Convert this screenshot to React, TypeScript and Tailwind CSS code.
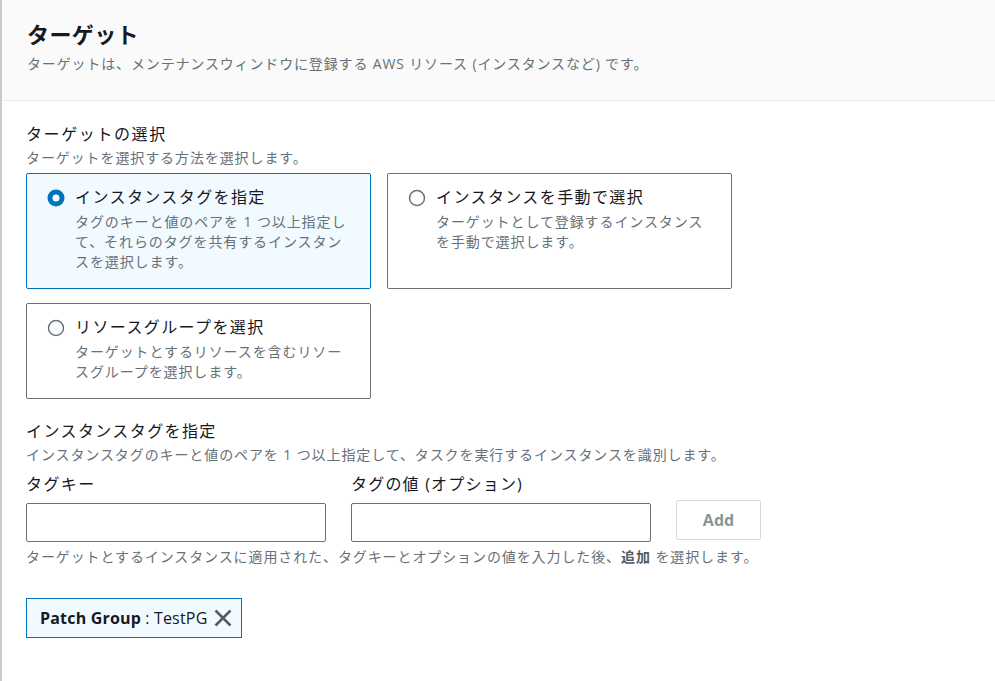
import React from "react";

const font = { fontFamily: '"Open Sans", "Noto Sans CJK JP", sans-serif' };

function Radio({ checked }: { checked?: boolean }) {
  return checked ? (
    <svg width="18" height="18" viewBox="0 0 18 18" className="shrink-0">
      <circle cx="9" cy="9" r="6" fill="none" stroke="#0073bb" strokeWidth="5" />
    </svg>
  ) : (
    <svg width="18" height="18" viewBox="0 0 18 18" className="shrink-0">
      <circle cx="9" cy="9" r="7.5" fill="white" stroke="#687078" strokeWidth="1.5" />
    </svg>
  );
}

function Card({
  checked,
  title,
  desc,
}: {
  checked?: boolean;
  title: string;
  desc: string;
}) {
  return (
    <div
      className={`rounded-[2px] border px-[20px] pt-[12px] pb-[16px] ${
        checked ? "border-[#0073bb] bg-[#f1faff]" : "border-[#687078] bg-white"
      }`}
    >
      <div className="flex gap-[10px]">
        <div className="pt-[3px]">
          <Radio checked={checked} />
        </div>
        <div>
          <div className="text-[16px] leading-[22px] text-[#16191f] tracking-[1.4px]">{title}</div>
          <div className="mt-[4px] text-[14px] leading-[20px] text-[#687078] tracking-[0.9px]">{desc}</div>
        </div>
      </div>
    </div>
  );
}

export default function App() {
  return (
    <div style={font} className="min-h-[681px] w-[995px] border-l-2 border-[#c6ccd0] bg-white">
      <div className="border-b border-[#eaeded] bg-[#fafafa] px-[25px] pt-[19px] pb-[26px]">
        <h1 className="text-[22px] font-bold leading-[30px] text-[#16191f] tracking-[0.4px]">ターゲット</h1>
        <p className="mt-[5px] text-[14px] leading-[20px] text-[#687078] tracking-[0.85px]">
          ターゲットは、メンテナンスウィンドウに登録する AWS リソース (インスタンスなど) です。
        </p>
      </div>

      <div className="px-[24px] pt-[21px]">
        <div className="text-[16px] leading-[24px] text-[#16191f] tracking-[1.6px]">ターゲットの選択</div>
        <div className="mt-[2px] text-[14px] leading-[20px] text-[#687078] tracking-[0.9px]">
          ターゲットを選択する方法を選択します。
        </div>

        <div className="mt-[5px] grid w-[706px] grid-cols-2 gap-x-[16px] gap-y-[14px]">
          <Card
            checked
            title="インスタンスタグを指定"
            desc="タグのキーと値のペアを 1 つ以上指定して、それらのタグを共有するインスタンスを選択します。"
          />
          <Card
            title="インスタンスを手動で選択"
            desc="ターゲットとして登録するインスタンスを手動で選択します。"
          />
          <Card
            title="リソースグループを選択"
            desc="ターゲットとするリソースを含むリソースグループを選択します。"
          />
        </div>

        <div className="mt-[20px] text-[16px] leading-[24px] text-[#16191f] tracking-[1.4px]">インスタンスタグを指定</div>
        <div className="mt-[2px] text-[14px] leading-[20px] text-[#687078] tracking-[0.9px]">
          インスタンスタグのキーと値のペアを 1 つ以上指定して、タスクを実行するインスタンスを識別します。
        </div>

        <div className="mt-[8px] flex items-end gap-[25px]">
          <div className="w-[300px]">
            <div className="mb-[8px] text-[16px] leading-[22px] text-[#16191f] tracking-[1.4px]">タグキー</div>
            <div className="h-[39px] rounded-[2px] border border-[#687078] bg-white" />
          </div>
          <div className="w-[300px]">
            <div className="mb-[8px] text-[16px] leading-[22px] text-[#16191f] tracking-[1.2px]">タグの値 (オプション)</div>
            <div className="h-[39px] rounded-[2px] border border-[#687078] bg-white" />
          </div>
          <div className="mb-[2px] flex h-[40px] w-[85px] items-center justify-center rounded-[2px] border border-[#d5dbdb] bg-white text-[16px] font-bold text-[#879596]">
            Add
          </div>
        </div>

        <div className="mt-[5px] text-[14px] leading-[20px] text-[#687078] tracking-[0.9px]">
          ターゲットとするインスタンスに適用された、タグキーとオプションの値を入力した後、
          <span className="font-bold text-[#545b64]">追加</span> を選択します。
        </div>

        <div className="mt-[31px] inline-flex h-[40px] items-center border border-[#0073bb] bg-[#f1faff] pl-[13px] pr-[7px] text-[16px] text-[#16191f]">
          <span className="font-bold tracking-[0.2px]">Patch Group</span>
          <span className="ml-[4px] tracking-[0.2px]">: TestPG</span>
          <svg width="22" height="22" viewBox="0 0 22 22" className="ml-[4px]">
            <path d="M3.5 3.5 L18.5 18.5 M18.5 3.5 L3.5 18.5" stroke="#545b64" strokeWidth="2.5" />
          </svg>
        </div>
      </div>
    </div>
  );
}
